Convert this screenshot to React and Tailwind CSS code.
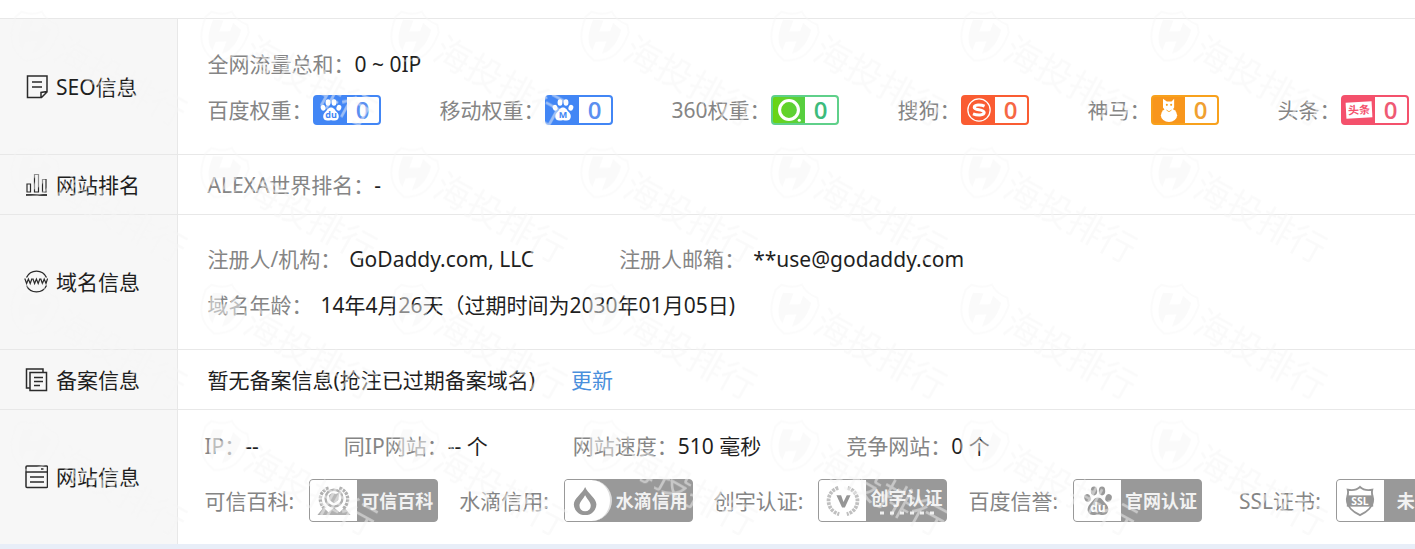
const dark = "text-[#1f1f1f]";
const gray = "text-[#858585]";

function Watermark() {
  return (
    <svg aria-hidden="true" className="pointer-events-none absolute inset-0 h-full w-full max-w-[1330px]">
      <defs>
        <pattern id="wm" width="190" height="136.5" patternUnits="userSpaceOnUse">
          <g fill="#f6f6f6" fillOpacity="0.5" transform="translate(33 36) rotate(20)">
            <path d="M0-26C5-21 12-19 19-19L23-12C23 8 18 20 0 26C-18 20-23 8-23-12L-19-19C-12-19-5-21 0-26Z" fill="none" stroke="#f6f6f6" strokeOpacity="0.4" strokeWidth="2" />
            <path d="M-15-12L-5-15V-3L5-7V-16L15-12C16 3 12 13 5 17V4L-5 8V17C-12 13-16 3-15-12Z" />
          </g>
          <text transform="translate(51 58) rotate(29)" fontSize="36" fill="#f6f6f6" fillOpacity="0.5" className="font-['Noto_Sans_CJK_SC',sans-serif]">海投排行</text>
        </pattern>
      </defs>
      <rect width="100%" height="100%" fill="url(#wm)" />
    </svg>
  );
}

function Icon({ children }) {
  return (
    <svg aria-hidden="true" viewBox="0 0 24 24" className="h-6 w-6 shrink-0" fill="none" stroke="#2b2b2b" strokeWidth="1.5">
      {children}
    </svg>
  );
}

const noteIcon = (
  <Icon>
    <path d="M3.500 1H23V17L17.500 22.500H3.500ZM23 16.500L17 17.500V22.500M8 7H18M8 12H18" />
  </Icon>
);
const barsIcon = (
  <Icon>
    <path d="M2 22H23" strokeWidth="1.800" />
    <path d="M3 11H6.500V19H3ZM10.500 1.500H14.500V19H10.500ZM18.500 6.500H22V19H18.500Z" strokeWidth="1.200" />
  </Icon>
);
const wwwIcon = (
  <Icon>
    <path d="M2.500 7.500A11 11 0 0 1 22.500 7.500M2.500 15.500A11 11 0 0 0 22.500 15.500" strokeWidth="1.300" />
    <path d="M0.800 8.500L2.600 13.500L4.400 9L6.200 13.500L8 8.500M8.800 8.500L10.600 13.500L12.400 9L14.200 13.500L16 8.500M16.600 8.500L18.400 13.500L20.200 9L22 13.500L23.600 8.500" strokeWidth="1.200" />
  </Icon>
);
const docsIcon = (
  <Icon>
    <path d="M6 4.500H22.500V22.500H6ZM6 20H2.500V1H19V4.500M10 9.500H19M10 13.500H19M10 17.500H16" />
  </Icon>
);
const pageIcon = (
  <Icon>
    <rect x="2" y="1" width="21.500" height="21.500" rx="1" />
    <path d="M2 7H23.500M6 12H20M6 17H20M17 4H19.500" />
  </Icon>
);

function Paw({ letter, ink, hole }) {
  return (
    <svg aria-hidden="true" viewBox="0 0 30 32" className="h-full w-full" fill={ink}>
      <ellipse cx="4.5" cy="13" rx="3.2" ry="4" transform="rotate(-18 4.5 13)" />
      <ellipse cx="11" cy="6" rx="3.2" ry="4.4" />
      <ellipse cx="19" cy="6" rx="3.2" ry="4.4" />
      <ellipse cx="25.5" cy="13" rx="3.2" ry="4" transform="rotate(18 25.5 13)" />
      <path d="M15 12.5C19 12.5 20 16 23 19C27 23 26 30 20 30C17 30 17 29.5 15 29.5C13 29.5 13 30 10 30C4 30 3 23 7 19C10 16 11 12.5 15 12.5Z" />
      <text x="15" y="27" textAnchor="middle" fontSize="12" fontWeight="700" fill={hole} className="font-['Open_Sans',sans-serif]">{letter}</text>
    </svg>
  );
}

const circleLogo = (
  <svg aria-hidden="true" viewBox="0 0 28 28" className="h-full w-full" fill="none" stroke="#fff">
    <circle cx="14" cy="14" r="11" strokeWidth="3.600" />
    <circle cx="26" cy="26" r="1.800" fill="#fff" stroke="none" />
  </svg>
);
const sogouLogo = (
  <svg aria-hidden="true" viewBox="0 0 28 28" className="h-full w-full" fill="none" stroke="#fff">
    <circle cx="14" cy="14" r="13" strokeWidth="1.500" />
    <path d="M20.500 9.500C16 7.500 8.500 7.500 8.500 11C8.500 14.500 20 13 20 17C20 20.500 12 20.500 7 18.500" strokeWidth="3.600" />
  </svg>
);
const squirrelLogo = (
  <svg aria-hidden="true" viewBox="0 0 28 28" className="h-full w-full" fill="#fff">
    <path d="M7 11V1L11.500 4H17L20 1V11L18 14H9Z" />
    <ellipse cx="14" cy="20" rx="9.500" ry="8" />
    <circle cx="11.500" cy="8" r="1.200" fill="#f8a11c" />
    <circle cx="16.500" cy="8" r="1.200" fill="#f8a11c" />
    <path d="M11 14L14 16L17 14" stroke="#f8a11c" fill="none" />
  </svg>
);
const toutiaoLogo = (
  <span className="block -rotate-3 bg-white text-center text-[11px] leading-4 font-bold text-[#f4516c]">头条</span>
);

function Rank({ label, box, logo, logoBox = "h-6 w-6" }) {
  return (
    <li className="flex shrink-0 items-center">
      <span className={gray}>{label}：</span>
      <a href="#rank" className={`flex h-[30px] w-[68px] rounded-sm border-2 ${box}`}>
        <span className="flex w-8 items-center justify-center">
          <span className={logoBox}>{logo}</span>
        </span>
        <span className="flex flex-1 items-center justify-center rounded-r-[2px] bg-white font-['Open_Sans',sans-serif] text-2xl leading-6 font-semibold">0</span>
      </a>
    </li>
  );
}

const sealLogo = (
  <svg aria-hidden="true" viewBox="0 0 36 34" className="h-full w-full" fill="none" stroke="#b0b0b0">
    <path d="M8 25C0 17 3 6 13 3M28 25C36 17 33 6 23 3" strokeWidth="3.500" strokeDasharray="3 1" />
    <circle cx="18" cy="14" r="9" strokeWidth="2.500" />
    <path d="M13 11L16 9L20 10L23 9L22 16L18 19L14 16Z" fill="#b8b8b8" />
    <path d="M2 31L7 25L12 30L18 25L24 30L29 25L34 31Z" fill="#b0b0b0" strokeWidth="1.500" />
  </svg>
);
const dropLogo = (
  <svg aria-hidden="true" viewBox="0 0 36 34" className="h-full w-full">
    <path d="M16 2C19 9 28 14 28 20.500A12 11.500 0 0 1 4 20.500C4 14 13 9 16 2Z" fill="#969696" />
    <path d="M16 11C18 15 22 18 22 22A6 6 0 0 1 10 22C10 18 14 15 16 11Z" fill="#fff" />
  </svg>
);
const laurelLogo = (
  <svg aria-hidden="true" viewBox="0 0 36 34" className="h-full w-full" fill="none">
    <path d="M13 3C-1 7-1 27 14 31M23 3C37 7 37 27 22 31" stroke="#c0c0c0" strokeWidth="4" strokeDasharray="3 1" />
    <path d="M11 11H16L18.500 18L22 11H26L20 24H17Z" fill="#969696" />
  </svg>
);
const sslLogo = (
  <svg aria-hidden="true" viewBox="0 0 36 34" className="h-full w-full">
    <path d="M18 2C21 5 26 6 31 5C30 9 31 11 32 15C32 23 25 29 18 32C11 29 4 23 4 15C5 11 6 9 5 5C10 6 15 5 18 2Z" fill="none" stroke="#969696" strokeWidth="2" />
    <path d="M4 11H32V23H4Z" fill="#969696" />
    <text x="18" y="21" textAnchor="middle" fontSize="11" fontWeight="700" fill="#fff" className="font-['Open_Sans',sans-serif]">SSL</text>
  </svg>
);

function Cert({ label, name, logo, logoBox = "w-9", round, dots, className = "" }) {
  return (
    <li className={`flex shrink-0 items-center gap-[15px] ${className}`}>
      <span className={gray}>{label}:</span>
      <a href="#cert" className="flex h-[43px] w-[129px] rounded-sm border border-[#999] bg-[#999]">
        <span className={`flex w-[47px] shrink-0 items-center justify-center rounded-l-[3px] bg-white ${round ? "rounded-r-[24px] border-r-2 border-[#ddd]" : ""}`}>
          <span className={`block h-8 ${logoBox}`}>{logo}</span>
        </span>
        <span className="flex flex-1 flex-col items-center justify-center text-lg leading-6 font-bold whitespace-nowrap text-[#f2f2f2]">
          {name}
          {dots && (
            <svg aria-hidden="true" viewBox="0 0 60 6" className="h-[6px] w-[60px]" stroke="#eee" strokeWidth="3" strokeDasharray="4 6">
              <path d="M4 3H58" />
            </svg>
          )}
        </span>
      </a>
    </li>
  );
}

function Row({ icon, title, children, height }) {
  return (
    <tr className={`border-t border-[#e8e8e8] ${height}`}>
      <th scope="row" className={`border-r border-[#e8e8e8] bg-[#f7f7f7] p-0 pl-6 text-left align-middle font-normal ${dark}`}>
        <span className="flex items-center gap-2">
          {icon}
          {title}
        </span>
      </th>
      <td className="p-0 pl-[30px] align-middle">{children}</td>
    </tr>
  );
}

function Field({ label, value, className = "" }) {
  return (
    <div className={`flex shrink-0 ${className}`}>
      <span className={gray}>{label}：</span>
      <span className={dark}>{value}</span>
    </div>
  );
}

export default function App() {
  return (
    <main className="relative overflow-hidden bg-white pt-[18px] font-['Noto_Sans','Noto_Sans_CJK_SC',sans-serif] text-[21px] leading-[30px] font-normal whitespace-nowrap">
      <table className="w-full table-fixed border-collapse">
        <colgroup>
          <col className="w-[177px]" />
          <col />
        </colgroup>
        <tbody>
          <Row icon={noteIcon} title="SEO信息" height="h-[136px]">
            <Field label="全网流量总和" value="0 ~ 0IP" />
            <ul className="mt-4 flex gap-[59px]">
              <Rank label="百度权重" box="border-[#4286f5] bg-[#4286f5] text-[#5b8ff0]" logo={<Paw letter="du" ink="#fff" hole="#4286f5" />} />
              <Rank label="移动权重" box="border-[#4286f5] bg-[#4286f5] text-[#5b8ff0]" logo={<Paw letter="M" ink="#fff" hole="#4286f5" />} />
              <Rank label="360权重" box="border-[#5fd08a] bg-linear-to-r from-[#6ad50c] to-[#3cc85a] text-[#3dbb7c]" logo={circleLogo} />
              <Rank label="搜狗" box="border-[#fa5c32] bg-[#fa5c32] text-[#f66744]" logo={sogouLogo} />
              <Rank label="神马" box="border-[#f8a11c] bg-[#f8961c] text-[#f0a030]" logo={squirrelLogo} />
              <Rank label="头条" box="border-[#f4516c] bg-[#f4516c] text-[#ef5a74]" logoBox="w-[26px]" logo={toutiaoLogo} />
            </ul>
          </Row>
          <Row icon={barsIcon} title="网站排名" height="h-[60px]">
            <Field label="ALEXA世界排名" value="-" />
          </Row>
          <Row icon={wwwIcon} title="域名信息" height="h-[135px]">
            <div className="flex gap-[85px]">
              <Field className="gap-2" label="注册人/机构" value="GoDaddy.com, LLC" />
              <Field className="gap-2" label="注册人邮箱" value="**use@godaddy.com" />
            </div>
            <Field className="mt-4 gap-2" label="域名年龄" value="14年4月26天（过期时间为2030年01月05日)" />
          </Row>
          <Row icon={docsIcon} title="备案信息" height="h-[60px]">
            <div className={`flex gap-9 ${dark}`}>
              <span>暂无备案信息(抢注已过期备案域名)</span>
              <a href="#update" className="text-[#4a8fdc]">更新</a>
            </div>
          </Row>
          <Row icon={pageIcon} title="网站信息" height="h-[134px]">
            <div className="-ml-[3px] flex gap-[85px]">
              <Field label="IP" value="--" />
              <Field label="同IP网站" value="-- 个" />
              <Field label="网站速度" value="510 毫秒" />
              <Field label="竞争网站" value="0 个" />
            </div>
            <ul className="mt-[18px] -ml-[3px] flex gap-[21px]">
              <Cert label="可信百科" name="可信百科" logo={sealLogo} />
              <Cert label="水滴信用" name="水滴信用" logo={dropLogo} round />
              <Cert label="创宇认证" name="创宇认证" logo={laurelLogo} dots />
              <Cert label="百度信誉" name="官网认证" logo={<Paw letter="du" ink="#999" hole="#fff" />} logoBox="w-[30px]" />
              <Cert className="ml-4" label="SSL证书" name="未认证" logo={sslLogo} />
            </ul>
          </Row>
        </tbody>
      </table>
      <div className="h-[5px] bg-[#e8eef8]" />
      <Watermark />
    </main>
  );
}
